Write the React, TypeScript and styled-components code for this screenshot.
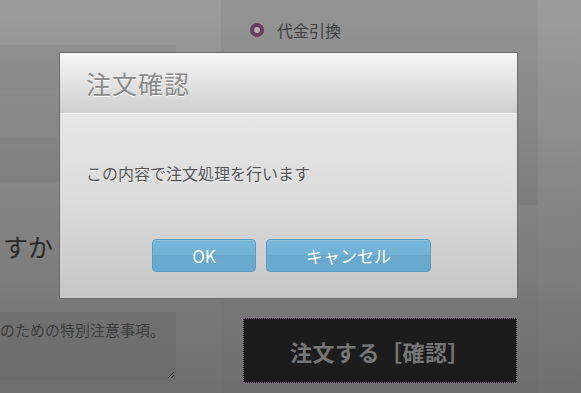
import React from 'react';
import styled, {createGlobalStyle} from 'styled-components';

const GlobalStyle = createGlobalStyle`
    html, body {
        margin: 0;
        padding: 0;
        background: #777;
    }
    body {
        font-family: "Noto Sans CJK JP", "Noto Sans", sans-serif;
    }
`;

const FONT = '"Noto Sans CJK JP", "Noto Sans", sans-serif';

export default function App() {
    return (
        <>
            <GlobalStyle/>
            <Page>
                <LeftColumn>
                    <Field/>
                    <Field $tall={true}/>
                    <Field/>
                    <Question>すか</Question>
                    <NoteArea>
                        <NoteText>のための特別注意事項。</NoteText>
                        <ResizeGrip viewBox='0 0 10 10'>
                            <path
                                d='M9 3 L3 9 M9 6 L6 9'
                                stroke='#2a2a2a'
                                strokeWidth='1'
                            />
                        </ResizeGrip>
                    </NoteArea>
                </LeftColumn>
                <RightColumn>
                    <PaymentPanel>
                        <RadioRow>
                            <Radio/>
                            <RadioLabel>代金引換</RadioLabel>
                        </RadioRow>
                    </PaymentPanel>
                    <SubmitButton>注文する［確認］</SubmitButton>
                </RightColumn>
                <Gutter/>

                <Dialog>
                    <DialogHeader>
                        <DialogTitle>注文確認</DialogTitle>
                    </DialogHeader>
                    <DialogBody>
                        <Message>この内容で注文処理を行います</Message>
                        <ButtonRow>
                            <DialogButton $width={104}>OK</DialogButton>
                            <DialogButton $width={165}>キャンセル</DialogButton>
                        </ButtonRow>
                    </DialogBody>
                </Dialog>
            </Page>
        </>
    );
}

const Page = styled.div`
    position: relative;
    width: 581px;
    height: 393px;
    overflow: hidden;
    display: grid;
    grid-template-columns: 221px 317px 1fr;
    background: linear-gradient(#9b9b9b, #6d6d6d);
    font-family: ${FONT};
`;

const LeftColumn = styled.div`
    display: flex;
    flex-direction: column;
    padding-top: 45px;
    background: rgba(255, 255, 255, 0.015);
`;

const Field = styled.div<{$tall?: boolean}>`
    width: 176px;
    height: ${(p) => (p.$tall ? 47 : 45)}px;
    background: rgba(0, 0, 0, ${(p) => (p.$tall ? 0.035 : 0.05)});
`;

const Question = styled.div`
    margin-top: 48px;
    padding-left: 3px;
    height: 32px;
    font-size: 25px;
    line-height: 32px;
    color: #2a2a2a;
    white-space: nowrap;
`;

const NoteArea = styled.div`
    position: relative;
    margin-top: 49px;
    width: 176px;
    height: 69px;
    box-sizing: border-box;
    border-top: 1px solid rgba(255, 255, 255, 0.06);
    background: rgba(0, 0, 0, 0.05);
    overflow: hidden;
`;

const NoteText = styled.div`
    margin: 8px 0 0 0;
    font-size: 15px;
    line-height: 20px;
    color: #3c3c3c;
    white-space: nowrap;
`;

const ResizeGrip = styled.svg`
    position: absolute;
    right: 1px;
    bottom: 1px;
    width: 10px;
    height: 10px;
`;

const RightColumn = styled.div`
    display: flex;
    flex-direction: column;
`;

const PaymentPanel = styled.div`
    height: 205px;
    background: rgba(0, 0, 0, 0.04);
`;

const RadioRow = styled.div`
    display: flex;
    align-items: center;
    gap: 13px;
    margin: 19px 0 0 29px;
`;

const Radio = styled.span`
    width: 6px;
    height: 6px;
    border-radius: 50%;
    border: 4px solid #6a3e63;
    background: #b8b0b6;
`;

const RadioLabel = styled.span`
    font-size: 16px;
    line-height: 22px;
    color: #3e3e3e;
`;

const SubmitButton = styled.div`
    margin: 113px 0 0 22px;
    width: 274px;
    height: 65px;
    box-sizing: border-box;
    display: flex;
    align-items: center;
    justify-content: center;
    background: #1c1c1c;
    outline: 1px dotted #76607a;
    outline-offset: -1px;
    color: #767676;
    font-size: 22px;
    font-weight: 700;
    letter-spacing: 0.5px;
`;

const Gutter = styled.div`
    background: rgba(255, 255, 255, 0.02);
`;

const Dialog = styled.div`
    position: absolute;
    left: 59px;
    top: 52px;
    width: 459px;
    height: 247px;
    box-sizing: border-box;
    border: 1px solid #6c6c6c;
    display: flex;
    flex-direction: column;
`;

const DialogHeader = styled.div`
    height: 60px;
    flex: none;
    display: flex;
    align-items: center;
    padding-left: 26px;
    border-bottom: 1px solid #f2f2f2;
    background: linear-gradient(#f6f6f6 0%, #e6e6e6 40%, #cfcfcf 100%);
`;

const DialogTitle = styled.h1`
    margin: 0;
    font-size: 25px;
    font-weight: 400;
    color: #8a8a8a;
    text-shadow: 0 1px 0 #ffffff;
    letter-spacing: 1px;
`;

const DialogBody = styled.div`
    flex: 1;
    display: flex;
    flex-direction: column;
    padding: 48px 26px 0;
    background: linear-gradient(#e6e6e6 0%, #dcdcdc 45%, #c6c6c6 100%);
`;

const Message = styled.p`
    margin: 0;
    font-size: 16px;
    line-height: 22px;
    color: #555;
    text-shadow: 0 1px 0 rgba(255, 255, 255, 0.7);
`;

const ButtonRow = styled.div`
    display: flex;
    justify-content: center;
    gap: 10px;
    margin-top: 55px;
    padding-left: 6px;
`;

const DialogButton = styled.button<{$width: number}>`
    width: ${(p) => p.$width}px;
    height: 33px;
    padding: 0;
    border: 1px solid #5b9bbf;
    border-radius: 4px;
    background: linear-gradient(#77b7d9 0%, #70b0d4 50%, #67a8cc 50%, #6aaace 100%);
    color: #ffffff;
    font-family: ${FONT};
    font-size: 17px;
    line-height: 31px;
    cursor: pointer;
    box-shadow: inset 0 1px 0 rgba(255, 255, 255, 0.2);
`;
